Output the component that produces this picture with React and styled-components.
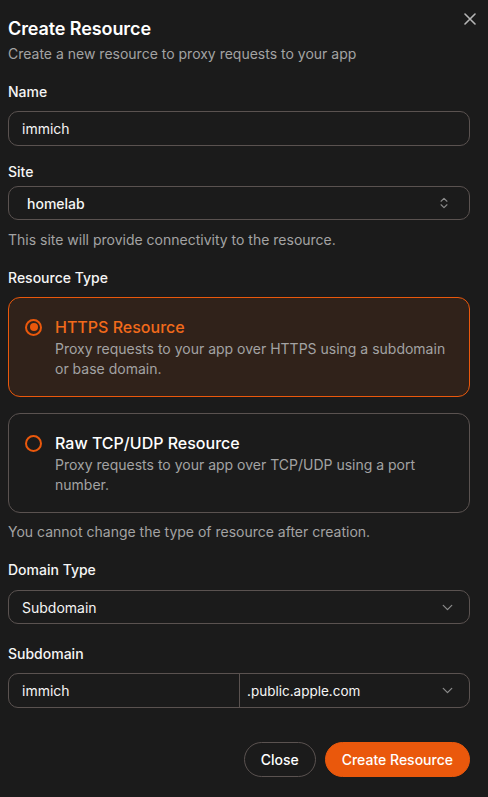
import React from "react";
import styled, { createGlobalStyle } from "styled-components";

const Global = createGlobalStyle`
  html, body { margin: 0; padding: 0; background: #1b1b1b; }
  body { font-family: Inter, "Noto Sans", sans-serif; color: #f2f2f2; -webkit-font-smoothing: antialiased; }
  * { box-sizing: border-box; }
`;

const Dialog = styled.div`
  position: relative;
  width: 488px;
  min-height: 797px;
  padding: 15px 18px 0 8px;
  background: #1b1b1b;
`;

const CloseX = styled.button`
  position: absolute;
  top: 12px;
  right: 11px;
  width: 14px;
  height: 14px;
  padding: 0;
  border: 0;
  background: none;
  color: #b5b5b5;
  display: flex;
  align-items: center;
  justify-content: center;
`;

const Title = styled.h2`
  margin: 0;
  font-size: 18px;
  line-height: 28px;
  font-weight: 600;
  color: #ffffff;
  letter-spacing: -0.1px;
`;

const Subtitle = styled.p`
  margin: 1px 0 0;
  font-size: 14px;
  line-height: 20px;
  color: #a3a3a3;
`;

const Label = styled.div`
  margin-top: ${(p) => p.$top}px;
  margin-bottom: ${(p) => p.$bottom}px;
  font-size: 14px;
  line-height: 20px;
  font-weight: 500;
  color: #f5f5f5;
`;

const Help = styled.p`
  margin: ${(p) => p.$top}px 0 0;
  font-size: 14px;
  line-height: 20px;
  color: #a3a3a3;
`;

const Box = styled.div`
  height: ${(p) => p.$h || 35}px;
  border: 1.5px solid #5a5250;
  border-radius: 10px;
  display: flex;
  align-items: center;
  padding: 0 ${(p) => p.$pr || 13}px 0 ${(p) => p.$pl || 13}px;
  font-size: 14px;
  font-weight: ${(p) => p.$w || 400};
  color: #f5f5f5;
`;

const BoxText = styled.span`
  flex: 1;
`;

const Split = styled.div`
  height: 35px;
  border: 1.5px solid #5a5250;
  border-radius: 10px;
  display: grid;
  grid-template-columns: 231px 1fr;
  font-size: 14px;
  color: #f5f5f5;
`;

const SplitLeft = styled.div`
  display: flex;
  align-items: center;
  padding-left: 13px;
  border-right: 1.5px solid #5a5250;
`;

const SplitRight = styled.div`
  display: flex;
  align-items: center;
  padding: 0 13px 0 7px;
  font-size: 13.5px;
`;

const Cards = styled.div`
  display: flex;
  flex-direction: column;
  gap: 16px;
  margin-top: 9px;
`;

const Card = styled.div`
  border: 1.5px solid ${(p) => (p.$active ? "#ea580c" : "#5a5250")};
  background: ${(p) => (p.$active ? "#30221a" : "transparent")};
  border-radius: 12px;
  padding: 17px 16px 17px 16px;
  display: flex;
  gap: 13px;
`;

const Radio = styled.span`
  flex: none;
  width: 17px;
  height: 17px;
  margin-top: 3.5px;
  border: 2px solid #ea580c;
  border-radius: 50%;
  display: flex;
  align-items: center;
  justify-content: center;
  &::after {
    content: "";
    display: ${(p) => (p.$on ? "block" : "none")};
    width: 8px;
    height: 8px;
    border-radius: 50%;
    background: #ea580c;
  }
`;

const CardBody = styled.div`
  flex: 1;
`;

const CardTitle = styled.div`
  font-size: 16px;
  line-height: 24px;
  font-weight: 500;
  color: ${(p) => (p.$active ? "#f26a1b" : "#ffffff")};
`;

const CardDesc = styled.div`
  font-size: 14px;
  line-height: 20px;
  color: #a3a3a3;
`;

const Footer = styled.div`
  display: flex;
  justify-content: flex-end;
  gap: 9px;
  margin-top: 34px;
`;

const Button = styled.button`
  height: 35px;
  border-radius: 999px;
  padding: 0 16px;
  font-family: inherit;
  font-size: 14px;
  font-weight: 500;
  color: #ffffff;
  border: 1.5px solid ${(p) => (p.$primary ? "#ea580c" : "#5a5250")};
  background: ${(p) => (p.$primary ? "#ea580c" : "transparent")};
`;

const Icon = styled.svg`
  flex: none;
  color: #8a8a8a;
`;

const UpDown = () => (
  <Icon width="14" height="14" viewBox="0 0 24 24" fill="none" stroke="currentColor" strokeWidth="2" strokeLinecap="round" strokeLinejoin="round">
    <path d="m7 15 5 5 5-5" />
    <path d="m7 9 5-5 5 5" />
  </Icon>
);

const Down = () => (
  <Icon width="17" height="17" viewBox="0 0 24 24" fill="none" stroke="currentColor" strokeWidth="1.8" strokeLinecap="round" strokeLinejoin="round">
    <path d="m6 9 6 6 6-6" />
  </Icon>
);

export default function App() {
  return (
    <>
      <Global />
      <Dialog>
        <CloseX aria-label="Close">
          <svg width="12" height="12" viewBox="0 0 12 12" fill="none" stroke="currentColor" strokeWidth="1.6" strokeLinecap="round">
            <path d="M1 1l10 10M11 1L1 11" />
          </svg>
        </CloseX>
        <Title>Create Resource</Title>
        <Subtitle>Create a new resource to proxy requests to your app</Subtitle>

        <Label $top={18} $bottom={9}>Name</Label>
        <Box>
          <BoxText>immich</BoxText>
        </Box>

        <Label $top={16} $bottom={4}>Site</Label>
        <Box $h={34} $pl={18} $pr={18} $w={500}>
          <BoxText>homelab</BoxText>
          <UpDown />
        </Box>
        <Help $top={10}>This site will provide connectivity to the resource.</Help>

        <Label $top={18} $bottom={0}>Resource Type</Label>
        <Cards>
          <Card $active>
            <Radio $on />
            <CardBody>
              <CardTitle $active>HTTPS Resource</CardTitle>
              <CardDesc>Proxy requests to your app over HTTPS using a subdomain or base domain.</CardDesc>
            </CardBody>
          </Card>
          <Card>
            <Radio />
            <CardBody>
              <CardTitle>Raw TCP/UDP Resource</CardTitle>
              <CardDesc>Proxy requests to your app over TCP/UDP using a port number.</CardDesc>
            </CardBody>
          </Card>
        </Cards>
        <Help $top={9}>You cannot change the type of resource after creation.</Help>

        <Label $top={18} $bottom={10}>Domain Type</Label>
        <Box $h={34} $pr={13}>
          <BoxText>Subdomain</BoxText>
          <Down />
        </Box>

        <Label $top={20} $bottom={9}>Subdomain</Label>
        <Split>
          <SplitLeft>immich</SplitLeft>
          <SplitRight>
            <BoxText>.public.apple.com</BoxText>
            <Down />
          </SplitRight>
        </Split>

        <Footer>
          <Button>Close</Button>
          <Button $primary>Create Resource</Button>
        </Footer>
      </Dialog>
    </>
  );
}
